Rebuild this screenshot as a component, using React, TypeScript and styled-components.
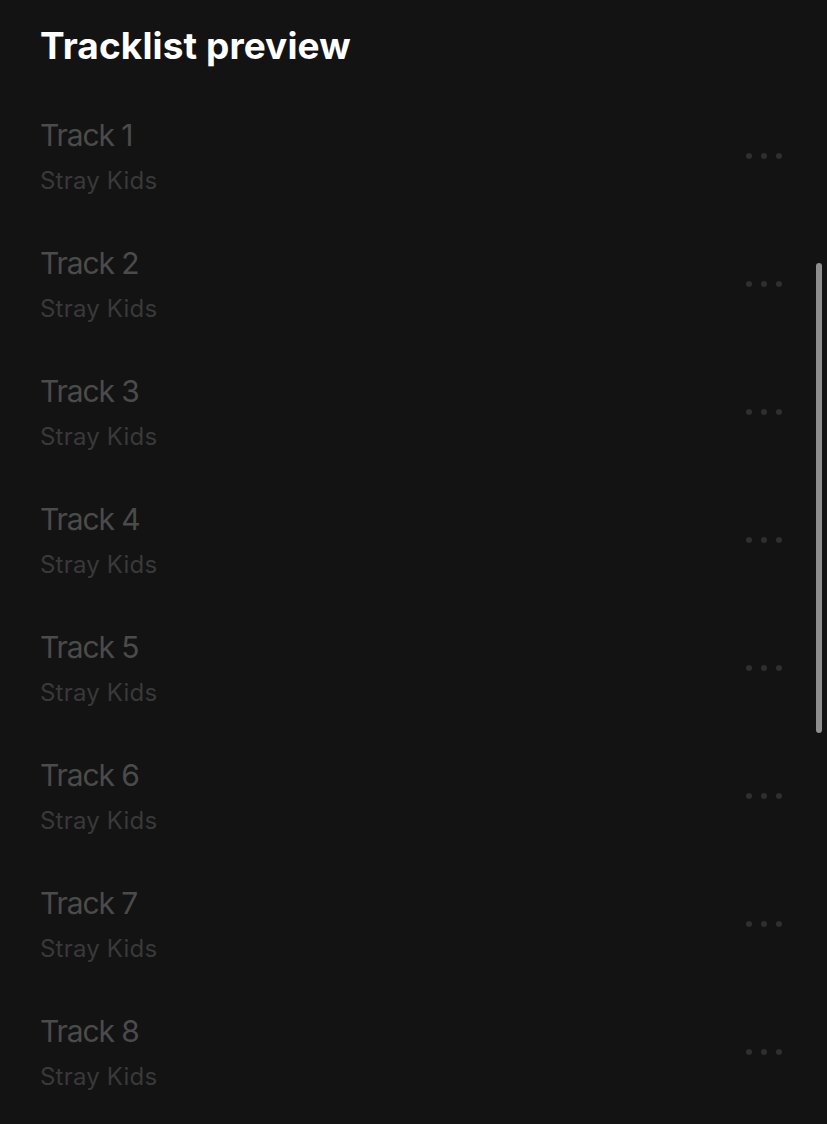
import React from 'react';
import styled, { createGlobalStyle } from 'styled-components';

const tracks = Array.from({ length: 8 }, (_, i) => ({
  title: `Track ${i + 1}`,
  artist: 'Stray Kids',
}));

const App: React.FC = () => {
  return (
    <>
      <GlobalStyle />
      <Screen>
        <Heading>Tracklist preview</Heading>
        <List>
          {tracks.map(track => (
            <Row key={track.title}>
              <Info>
                <TrackTitle>{track.title}</TrackTitle>
                <Artist>{track.artist}</Artist>
              </Info>
              <MoreButton aria-label="More options">
                <Dot />
                <Dot />
                <Dot />
              </MoreButton>
            </Row>
          ))}
        </List>
        <ScrollThumb />
      </Screen>
    </>
  );
};

const GlobalStyle = createGlobalStyle`
  html, body {
    margin: 0;
    background: #131313;
  }
  * {
    box-sizing: border-box;
  }
`;

const Screen = styled.div`
  position: relative;
  width: 827px;
  height: 1124px;
  overflow: hidden;
  background: #131313;
  padding: 24px 45px 0 40px;
  font-family: Inter, 'Noto Sans', sans-serif;
`;

const Heading = styled.h1`
  margin: 0;
  font-size: 37px;
  line-height: 44px;
  font-weight: 700;
  letter-spacing: 0.1px;
  color: #ffffff;
`;

const List = styled.div`
  margin-top: 24px;
  display: flex;
  flex-direction: column;
`;

const Row = styled.div`
  height: 128px;
  display: flex;
  align-items: center;
  justify-content: space-between;
`;

const Info = styled.div`
  display: flex;
  flex-direction: column;
  gap: 13px;
`;

const TrackTitle = styled.div`
  font-size: 30px;
  line-height: 36px;
  font-weight: 400;
  letter-spacing: -1.1px;
  color: #4b4b4b;
`;

const Artist = styled.div`
  font-size: 24px;
  line-height: 30px;
  letter-spacing: 0.2px;
  color: #393939;
`;

const MoreButton = styled.button`
  background: none;
  border: none;
  padding: 0;
  display: flex;
  align-items: center;
  gap: 9px;
  cursor: pointer;
`;

const Dot = styled.span`
  width: 6px;
  height: 6px;
  border-radius: 50%;
  background: #2f2f2f;
`;

const ScrollThumb = styled.div`
  position: absolute;
  top: 263px;
  right: 5px;
  width: 6px;
  height: 470px;
  border-radius: 3px;
  background: #8e8e8e;
`;

export default App;
